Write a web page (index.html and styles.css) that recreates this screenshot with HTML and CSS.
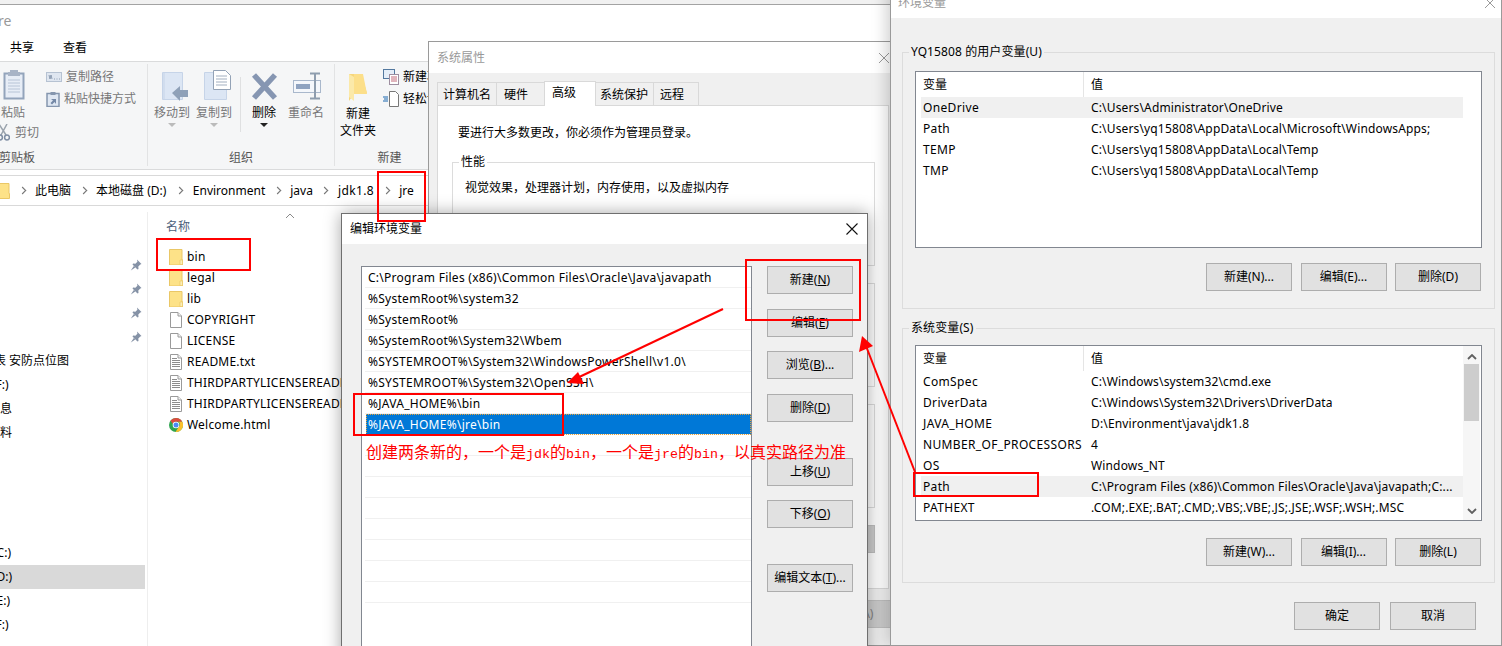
FILE: index.html
```html
<!DOCTYPE html>
<html lang="zh">
<head>
<meta charset="utf-8">
<title>环境变量</title>
<link rel="stylesheet" href="styles.css">
</head>
<body>
<svg class="defs" width="0" height="0" aria-hidden="true">
  <symbol id="folder" viewBox="0 0 14 16">
    <path d="M.5.5h12.5v10.500h1v5h-13.500z" fill="#fde288" stroke="#eac766"/>
    <path d="M11 11h2.500v4.500h-2.500z" fill="#fbeeb8" stroke="#eac766" stroke-width=".7"/>
  </symbol>
  <symbol id="doc" viewBox="0 0 14 16">
    <path d="M1.500.500h7.500l3.500 3.500v11.500h-11z" fill="#fff" stroke="#9a9a9a"/>
    <path d="M9 .5v3.500h3.500" fill="#f2f2f2" stroke="#9a9a9a"/>
  </symbol>
  <symbol id="txt" viewBox="0 0 14 16">
    <path d="M1.500.500h7.500l3.500 3.500v11.500h-11z" fill="#fff" stroke="#9a9a9a"/>
    <path d="M9 .5v3.500h3.500" fill="#f2f2f2" stroke="#9a9a9a"/>
    <path d="M3 4.500h5M3 6.500h8M3 8.500h8M3 10.500h8M3 12.500h8" stroke="#8c8c8c" fill="none"/>
  </symbol>
  <symbol id="pin" viewBox="0 0 12 12">
    <path d="M7 .5l4.500 4.500-1.200.6-2 2 .2 2.300-1 .6-5-5 .6-1 2.300.2 2-2zM3.800 7l-3 4.500 4.500-3z" fill="#8592a6"/>
  </symbol>
</svg>

<section class="win explorer">
  <div class="ex-title">re</div>
  <div class="ex-tabs"><span>共享</span><span>查看</span></div>
  <div class="ribbon">
    <div class="rgroup rg-clip">
      <div class="rbody">
        <div class="clip-col">
          <svg class="ic-paste" width="22" height="31" viewBox="0 0 22 31"><path d="M1.500 4.500h19v25h-19z" fill="#e7edf6" stroke="#93a4bb" stroke-width="2"/><path d="M7 3h8V1H7zM5 3h12v4H5z" fill="#a8b4c6"/><path d="M5 11h12M5 14h12M5 17h12M5 20h12M5 23h12" stroke="#b7c4d6"/></svg>
          <span class="lbl paste-lbl dim">粘贴</span>
          <span class="cut-row"><svg width="13" height="17" viewBox="0 0 13 17"><path d="M10 0L4 11M2 0l7 11" stroke="#9aa3ad" stroke-width="1.500" fill="none"/><circle cx="3" cy="13.500" r="2.400" fill="none" stroke="#7f8ea3" stroke-width="1.500"/><circle cx="10" cy="13.500" r="2.400" fill="none" stroke="#7f8ea3" stroke-width="1.500"/></svg><span class="lbl dim cut-lbl">剪切</span></span>
        </div>
        <div class="clip-list">
          <span class="clip-item first"><svg width="16" height="10" viewBox="0 0 16 10"><rect x=".5" y=".5" width="15" height="9" fill="#dfe6f0" stroke="#b6c2d2"/><path d="M3 3l1 4 1-4 1 4M8 7h1M10.500 7h1M13 7h1" stroke="#7a8ba3" fill="none" stroke-width=".8"/></svg><span class="lbl dim">复制路径</span></span>
          <span class="clip-item"><svg width="14" height="16" viewBox="0 0 14 16"><path d="M1 2.500h12v13h-12z" fill="#dfe7f2" stroke="#8596ae" stroke-width="1.500"/><path d="M4.500 1h5v3h-5z" fill="#8596ae"/><path d="M5 8h5v5l-1.500-2-2.500 2.500-1.500-1.500 2.500-2.500z" fill="#7488a6"/></svg><span class="lbl dim">粘贴快捷方式</span></span>
        </div>
      </div>
      <div class="rlabel clip-label">剪贴板</div>
    </div>
    <div class="rgroup rg-org">
      <div class="rbody org-body">
        <div class="bigitem">
          <svg width="36" height="39" viewBox="0 0 36 39"><path d="M8.500 5.500h20v27h-20z" fill="#dce6f4" stroke="#c6d4e8"/><path d="M10 5.500v27" stroke="#c6d4e8"/><path d="M18 26l8-7v4h8v7h-8v4z" fill="#8fa1b8"/></svg>
          <span class="lbl grey">移动到</span><i class="tri pale"></i>
        </div>
        <div class="bigitem">
          <svg width="36" height="39" viewBox="0 0 36 39"><path d="M8.500 5.500h22v27h-22z" fill="#dce6f4" stroke="#c6d4e8"/><path d="M17.500 3.500h12l5 5v14h-17z" fill="#fff" stroke="#93a2b6"/><path d="M20 9h11M20 12h11M20 15h11M20 18h11" stroke="#a2afc0"/></svg>
          <span class="lbl grey">复制到</span><i class="tri pale"></i>
        </div>
        <div class="vsep"></div>
        <div class="bigitem">
          <svg width="36" height="39" viewBox="0 0 36 39"><path d="M8 8l21 23M29 8L8 31" stroke="#8696b2" stroke-width="5.500" fill="none"/></svg>
          <span class="lbl">删除</span><i class="tri dark"></i>
        </div>
        <div class="bigitem">
          <svg width="36" height="39" viewBox="0 0 36 39"><rect x="5.500" y="13.500" width="27" height="12" fill="#f4f7fb" stroke="#a9b8cc"/><rect x="8" y="17" width="14" height="5" fill="#8fa3c0"/><path d="M22 6.500h10M27 6.500v25M22 31.500h10" stroke="#8e9dae" stroke-width="2" fill="none"/></svg>
          <span class="lbl grey">重命名</span>
        </div>
      </div>
      <div class="rlabel">组织</div>
    </div>
    <div class="rgroup rg-new">
      <div class="rbody new-body">
        <div class="bigitem">
          <svg width="36" height="39" viewBox="0 0 36 39"><path d="M9 7h14v6l4 13-13 1-5 7z" fill="#f6d67c"/><path d="M9 7l5 3v24l-5-4z" fill="#fbe9a9"/><path d="M23 7h-9v20h13z" fill="#fcdf8a"/></svg>
          <span class="lbl two">新建<br>文件夹</span>
        </div>
        <div class="new-list">
          <span class="clip-item first"><svg width="16" height="16" viewBox="0 0 16 16"><rect x=".5" y=".5" width="11" height="9" fill="#e5eef8" stroke="#53789f"/><rect x="6.500" y="5.500" width="9" height="10" fill="#fff" stroke="#9e8ea0"/><path d="M8 8h6M8 10h6M8 12h6" stroke="#c26b7a"/></svg><span class="lbl">新建项目</span></span>
          <span class="clip-item"><svg width="16" height="16" viewBox="0 0 16 16"><path d="M6.500.5h6l3 3v12h-9z" fill="#fff" stroke="#777"/><path d="M0 6h5M1 8h4M0 10h5" stroke="#1a66b0" stroke-width="1.200"/></svg><span class="lbl">轻松访问</span></span>
        </div>
      </div>
      <div class="rlabel">新建</div>
    </div>
  </div>
  <div class="addr">
    <svg class="addr-folder" width="10" height="16" viewBox="0 0 10 16"><path d="M-3 .5h12v10h.5v5h-12.500z" fill="#fde288" stroke="#eac766"/></svg>
    <i class="chev"></i><span>此电脑</span>
    <i class="chev"></i><span class="wide-a">本地磁盘 (D:)</span>
    <i class="chev"></i><span>Environment</span>
    <i class="chev"></i><span>java</span>
    <i class="chev"></i><span class="wide">jdk1.8</span>
    <i class="chev"></i><span>jre</span>
  </div>
  <div class="ex-main">
    <nav class="navpane">
      <div class="nrow"><svg class="pin" width="12" height="12"><use href="#pin"/></svg></div>
      <div class="nrow"><svg class="pin" width="12" height="12"><use href="#pin"/></svg></div>
      <div class="nrow"><svg class="pin" width="12" height="12"><use href="#pin"/></svg></div>
      <div class="nrow"><svg class="pin" width="12" height="12"><use href="#pin"/></svg></div>
      <div class="nrow"><span class="nt s6">表 安防点位图</span></div>
      <div class="nrow"><span class="nt s5">(F:)</span></div>
      <div class="nrow"><span class="nt s12">信息</span></div>
      <div class="nrow"><span class="nt s12">资料</span></div>
      <div class="nrow"></div><div class="nrow"></div><div class="nrow"></div><div class="nrow"></div>
      <div class="nrow"><span class="nt s4">(C:)</span></div>
      <div class="nrow on"><span class="nt s4">(D:)</span></div>
      <div class="nrow"><span class="nt s4">(E:)</span></div>
      <div class="nrow"><span class="nt s5">(F:)</span></div>
    </nav>
    <div class="files">
      <div class="fhead"><span>名称</span><svg class="sortcaret" width="10" height="6" viewBox="0 0 10 6"><path d="M1 5l4-4 4 4" fill="none" stroke="#8a8a8a"/></svg></div>
      <div class="frow"><svg width="14" height="16"><use href="#folder"/></svg><span>bin</span></div>
      <div class="frow"><svg width="14" height="16"><use href="#folder"/></svg><span>legal</span></div>
      <div class="frow"><svg width="14" height="16"><use href="#folder"/></svg><span>lib</span></div>
      <div class="frow"><svg width="14" height="16"><use href="#doc"/></svg><span>COPYRIGHT</span></div>
      <div class="frow"><svg width="14" height="16"><use href="#doc"/></svg><span>LICENSE</span></div>
      <div class="frow"><svg width="14" height="16"><use href="#txt"/></svg><span>README.txt</span></div>
      <div class="frow"><svg width="14" height="16"><use href="#txt"/></svg><span>THIRDPARTYLICENSEREADME.txt</span></div>
      <div class="frow"><svg width="14" height="16"><use href="#txt"/></svg><span>THIRDPARTYLICENSEREADME-JAVAFX.txt</span></div>
      <div class="frow"><svg width="14" height="16" viewBox="0 0 14 14"><circle cx="7" cy="7" r="7" fill="#2ea44f"/><path d="M7 0a7 7 0 0 1 6.200 3.700H7A3.300 3.300 0 0 0 3.900 6L1.400 2.800A7 7 0 0 1 7 0z" fill="#dd4b3e"/><path d="M13.200 3.700A7 7 0 0 1 6.500 14l3.200-5A3.300 3.300 0 0 0 9.500 3.700z" fill="#fbc02d"/><circle cx="7" cy="7" r="3.300" fill="#fff"/><circle cx="7" cy="7" r="2.500" fill="#4a8af4"/></svg><span>Welcome.html</span></div>
    </div>
  </div>
</section>

<section class="win sysprops">
  <header class="sys-title"><span>系统属性</span><svg width="10" height="10" viewBox="0 0 10 10"><path d="M0 0l10 10M10 0L0 10" stroke="#999"/></svg></header>
  <div class="sys-body">
    <div class="tabs">
      <span class="tab t1">计算机名</span><span class="tab t2">硬件</span><span class="tab t3 on">高级</span><span class="tab t4">系统保护</span><span class="tab t5">远程</span>
    </div>
    <div class="tabpanel">
      <p class="sys-note">要进行大多数更改，你必须作为管理员登录。</p>
      <div class="sbox perf"><span class="sbox-legend">性能</span><p>视觉效果，处理器计划，内存使用，以及虚拟内存</p></div>
      <div class="sbox prof"></div>
      <div class="sbox boot"></div>
      <div class="sys-envrow"><span class="btn envbtn dis">环境变量(N)...</span></div>
    </div>
    <div class="sys-foot"><span class="btn applybtn dis">应用(A)</span></div>
  </div>
</section>

<section class="win envdlg">
  <header class="env-title"><span>环境变量</span><svg width="10" height="10" viewBox="0 0 10 10"><path d="M0 0l10 10M10 0L0 10" stroke="#999"/></svg></header>
  <div class="env-body">
    <fieldset class="grp grp-user">
      <legend>YQ15808 的用户变量(U)</legend>
      <div class="lv lv-user">
        <div class="lv-main">
          <div class="lv-head"><span>变量</span><span>值</span></div>
          <div class="lv-row sel"><span>OneDrive</span><span>C:\Users\Administrator\OneDrive</span></div>
          <div class="lv-row"><span>Path</span><span>C:\Users\yq15808\AppData\Local\Microsoft\WindowsApps;</span></div>
          <div class="lv-row"><span>TEMP</span><span>C:\Users\yq15808\AppData\Local\Temp</span></div>
          <div class="lv-row"><span>TMP</span><span>C:\Users\yq15808\AppData\Local\Temp</span></div>
        </div>
      </div>
      <div class="btnrow"><span class="btn">新建(N)...</span><span class="btn">编辑(E)...</span><span class="btn">删除(D)</span></div>
    </fieldset>
    <fieldset class="grp grp-sys">
      <legend>系统变量(S)</legend>
      <div class="lv lv-sys">
        <div class="lv-main">
          <div class="lv-head"><span>变量</span><span>值</span></div>
          <div class="lv-row"><span>ComSpec</span><span>C:\Windows\system32\cmd.exe</span></div>
          <div class="lv-row"><span>DriverData</span><span>C:\Windows\System32\Drivers\DriverData</span></div>
          <div class="lv-row"><span>JAVA_HOME</span><span>D:\Environment\java\jdk1.8</span></div>
          <div class="lv-row"><span>NUMBER_OF_PROCESSORS</span><span>4</span></div>
          <div class="lv-row"><span>OS</span><span>Windows_NT</span></div>
          <div class="lv-row sel"><span>Path</span><span>C:\Program Files (x86)\Common Files\Oracle\Java\javapath;C:...</span></div>
          <div class="lv-row"><span>PATHEXT</span><span>.COM;.EXE;.BAT;.CMD;.VBS;.VBE;.JS;.JSE;.WSF;.WSH;.MSC</span></div>
        </div>
        <div class="sbar">
          <svg width="10" height="6" viewBox="0 0 10 6"><path d="M1 5l4-4 4 4" fill="none" stroke="#606060" stroke-width="1.800"/></svg>
          <div class="sthumb"></div>
          <svg class="sdown" width="10" height="6" viewBox="0 0 10 6"><path d="M1 1l4 4 4-4" fill="none" stroke="#606060" stroke-width="1.800"/></svg>
        </div>
      </div>
      <div class="btnrow"><span class="btn">新建(W)...</span><span class="btn">编辑(I)...</span><span class="btn">删除(L)</span></div>
    </fieldset>
    <div class="env-foot"><span class="btn">确定</span><span class="btn">取消</span></div>
  </div>
</section>

<section class="win editdlg">
  <header class="edit-title"><span>编辑环境变量</span><svg width="12" height="12" viewBox="0 0 12 12"><path d="M.5.500l11 11M11.500.500l-11 11" stroke="#111" stroke-width="1.100"/></svg></header>
  <div class="edit-body">
    <div class="pathlist">
      <div class="pl-row">C:\Program Files (x86)\Common Files\Oracle\Java\javapath</div>
      <div class="pl-row">%SystemRoot%\system32</div>
      <div class="pl-row">%SystemRoot%</div>
      <div class="pl-row">%SystemRoot%\System32\Wbem</div>
      <div class="pl-row">%SYSTEMROOT%\System32\WindowsPowerShell\v1.0\</div>
      <div class="pl-row">%SYSTEMROOT%\System32\OpenSSH\</div>
      <div class="pl-row">%JAVA_HOME%\bin</div>
      <div class="pl-row sel">%JAVA_HOME%\jre\bin</div>
      <div class="pl-row"></div><div class="pl-row"></div><div class="pl-row"></div><div class="pl-row"></div>
      <div class="pl-row"></div><div class="pl-row"></div><div class="pl-row"></div><div class="pl-row"></div>
    </div>
    <div class="edit-btns">
      <span class="btn">新建(<u>N</u>)</span>
      <span class="btn">编辑(<u>E</u>)</span>
      <span class="btn">浏览(<u>B</u>)...</span>
      <span class="btn">删除(<u>D</u>)</span>
      <span class="btn push">上移(<u>U</u>)</span>
      <span class="btn">下移(<u>O</u>)</span>
      <span class="btn push2">编辑文本(<u>T</u>)...</span>
    </div>
  </div>
</section>

<div class="mark m-jre"></div>
<div class="mark m-bin"></div>
<div class="mark m-new"></div>
<div class="mark m-java"></div>
<div class="mark m-path"></div>
<svg class="arrows" width="1502" height="646" viewBox="0 0 1502 646">
  <path d="M723 309L575 379" stroke="#f00" stroke-width="2" fill="none"/>
  <path d="M567 383l11-11 6 12z" fill="#f00"/>
  <path d="M915 472L866 346" stroke="#f00" stroke-width="2" fill="none"/>
  <path d="M862 336l-3 16 14-6z" fill="#f00"/>
</svg>
<div class="note">创建两条新的，一个是<span class="lat">jdk</span>的<span class="lat">bin</span>，一个是<span class="lat">jre</span>的<span class="lat">bin</span>，以真实路径为准</div>
</body>
</html>
```
FILE: styles.css
```css
* { box-sizing: border-box; }
html, body { margin: 0; height: 100%; }
body {
  position: relative;
  width: 1502px;
  height: 646px;
  overflow: hidden;
  background: #f1f1f1;
  color: #000;
  font: 12px/16px "Noto Sans", "Noto Sans CJK SC", sans-serif;
}
.defs { position: absolute; }
.win { position: absolute; display: flex; flex-direction: column; overflow: hidden; background: #fff; }

/* explorer window */
.explorer { left: 0; top: 4px; width: 900px; height: 642px; border-top: 1px solid #a3a3a3; }
.ex-title { height: 29px; padding-top: 8px; margin-left: -2px; color: #999; font-size: 14px; }
.ex-tabs { height: 27px; display: flex; gap: 29px; padding: 6px 0 0 10px; }
.ribbon { height: 109px; flex: none; display: flex; padding-top: 2px; background: #f5f6f7; border-top: 1px solid #dadbdc; border-bottom: 1px solid #dadbdc; }
.rgroup { display: flex; flex-direction: column; height: 102px; border-right: 1px solid #e2e3e4; flex: none; }
.rbody { flex: 1; display: flex; min-height: 0; }
.rlabel { height: 18px; line-height: 20px; text-align: center; color: #555; }
.rg-clip { width: 148px; }
.clip-label { text-align: left; margin-left: -1px; }
.rg-org { width: 187px; }
.rg-new { width: 110px; }
.lbl { white-space: nowrap; display: block; }
.dim, .grey { color: #777; }
.clip-col { width: 46px; flex: none; padding-top: 5px; display: flex; flex-direction: column; }
.ic-paste { margin-left: 3px; flex: none; }
.paste-lbl { margin: 5px 0 0 1px; }
.cut-row { display: flex; align-items: center; gap: 5px; margin: 3px 0 0 -3px; }
.clip-list { display: flex; flex-direction: column; padding-top: 5px; gap: 6px; }
.clip-item { display: flex; align-items: center; gap: 4px; height: 16px; }
.org-body { padding-left: 6px; gap: 6px; }
.bigitem { width: 36px; flex: none; display: flex; flex-direction: column; align-items: center; padding-top: 3px; }
.bigitem .lbl { margin-top: -1px; }
.bigitem .lbl.two { text-align: center; line-height: 17px; }
.tri { display: block; width: 0; height: 0; margin-top: 2px; border: 4px solid transparent; border-bottom: 0; }
.tri.pale { border-top-color: #bbb; }
.tri.dark { border-top-color: #222; }
.vsep { width: 1px; height: 55px; margin: 13px -1px 0 2px; background: #dfe0e1; }
.new-body { padding-left: 5px; }
.new-list { display: flex; flex-direction: column; gap: 6px; padding: 5px 0 0 7px; }

.addr { height: 31px; flex: none; display: flex; align-items: center; gap: 10.5px; margin-top: 5px; background: #fff; border-top: 1px solid #d9d9d9; border-bottom: 1px solid #d9d9d9; white-space: nowrap; }
.addr-folder { flex: none; }
.addr .wide { letter-spacing: .4px; }
.addr .wide-a { margin-right: 1.500px; }
.chev { width: 5px; height: 5px; flex: none; margin-left: -1px; border-top: 1px solid #777; border-right: 1px solid #777; transform: rotate(45deg) scale(1.1); }
.ex-main { flex: 1; display: flex; padding-top: 6px; min-height: 0; }
.navpane { width: 148px; flex: none; padding-top: 41px; border-right: 1px solid #eee; overflow: hidden; }
.nrow { height: 24px; width: 145px; display: flex; align-items: center; white-space: nowrap; }
.nrow.on { background: #d9d9d9; }
.pin { margin-left: 130px; }
.s4 { margin-left: -7px; }
.s5 { margin-left: -8px; }
.s6 { margin-left: -6px; }
.s12 { margin-left: -12px; }
.files { flex: 1; padding-left: 21px; position: relative; min-width: 0; }
.fhead { height: 34px; color: #4c607a; margin-left: -3px; padding-top: 7px; }
.sortcaret { position: absolute; left: 137px; top: 1px; }
.frow { height: 21px; display: flex; align-items: center; gap: 4px; white-space: nowrap; letter-spacing: .2px; }
.frow svg { flex: none; }

/* system properties */
.sysprops { left: 428px; top: 41px; width: 470px; height: 605px; border: 1px solid #9a9a9a; background: #f0f0f0; }
.sys-title { height: 31px; flex: none; background: #fff; color: #999; display: flex; justify-content: space-between; align-items: center; padding: 0 8px; }
.sys-body { flex: 1; display: flex; flex-direction: column; padding: 0 8px; }
.tabs { display: flex; height: 32px; padding: 9px 0 0 1px; align-items: flex-end; }
.tab { height: 23px; padding-top: 4px; background: #f0f0f0; border: 1px solid #d9d9d9; border-bottom: 0; margin-left: -1px; }
.t1 { width: 60px; padding-left: 5px; }
.t2 { width: 49px; padding-left: 7px; }
.t3 { width: 52px; padding-left: 7px; }
.t4 { width: 59px; padding-left: 4px; }
.t5 { width: 46px; padding-left: 6px; }
.tab.on { height: 25px; background: #fff; position: relative; top: 1px; padding-top: 3px; }
.tabpanel { height: 484px; flex: none; background: #fff; border: 1px solid #d9d9d9; padding: 0 13px 0 14px; }
.sys-note { margin: 19px 0 21px 6px; }
.sbox { position: relative; border: 1px solid #dcdcdc; }
.perf { height: 104px; padding: 17px 0 0 12px; }
.perf p { margin: 0; }
.sbox-legend { position: absolute; left: 6px; top: -9px; padding: 0 2px; background: #fff; }
.prof, .boot { height: 104px; margin-top: 17px; }
.sys-envrow { display: flex; justify-content: flex-end; margin-top: 17px; }
.sys-foot { display: flex; justify-content: flex-end; padding-top: 11px; margin-right: -8px; }
.btn { display: flex; align-items: center; justify-content: center; flex: none; width: 86px; height: 28px; background: #e1e1e1; border: 1px solid #adadad; white-space: nowrap; }
.btn.envbtn { width: 100px; justify-content: flex-start; padding-left: 4px; }
.btn.dis { background: #ccc; border-color: #bfbfbf; color: #838383; }

/* environment variables */
.envdlg { left: 890px; top: -13px; width: 612px; height: 659px; background: #f0f0f0; border: 1px solid #9a9a9a; border-top: 0; box-shadow: -4px 0 14px rgba(0,0,0,.18); }
.env-title { height: 31px; flex: none; background: #fff; display: flex; justify-content: space-between; align-items: center; padding: 0 6px 0 7px; color: #999; }
.env-body { flex: 1; padding: 0 6px 0 11px; display: flex; flex-direction: column; }
.grp { margin: 0; padding: 0 12px; border: 1px solid #dcdcdc; min-width: 0; }
.grp legend { padding: 0 2px; margin-left: -6px; line-height: 16px; height: 16px; letter-spacing: .1px; }
.grp-user { margin-top: 26px; height: 265px; }
.grp-sys { margin-top: 11px; height: 263px; }
.lv { display: flex; background: #fff; border: 1px solid #828790; overflow: hidden; }
.lv-user { height: 177px; margin-top: 11px; }
.lv-sys { height: 176px; margin-top: 9px; }
.lv-main { width: 547px; flex: none; padding-left: 5px; }
.lv-head, .lv-row { display: grid; grid-template-columns: 168px 1fr; padding-left: 2px; white-space: nowrap; }
.lv-head { height: 25px; align-items: center; position: relative; }
.lv-head::after { content: ""; position: absolute; left: 162px; top: 0; bottom: 0; width: 1px; background: #e5e5e5; }
.lv-row { height: 21px; align-items: center; letter-spacing: .15px; }
.lv-row span:first-child { letter-spacing: .35px; }
.lv-row.sel { background: #f0f0f0; }
.sbar { width: 17px; flex: none; display: flex; flex-direction: column; align-items: center; background: #f6f6f6; padding-top: 8px; }
.sthumb { width: 15px; height: 57px; margin-top: 4px; background: #cdcdcd; }
.sdown { margin-top: auto; margin-bottom: 6px; }
.btnrow { display: flex; justify-content: flex-end; gap: 8.500px; margin: 15px 1px 0 0; }
.grp-sys .btnrow { margin-top: 17px; }
.env-foot { display: flex; justify-content: flex-end; gap: 10px; margin: 19px 19px 0 0; }

/* edit dialog */
.editdlg { left: 341px; top: 213px; width: 527px; height: 460px; background: #f0f0f0; border: 1px solid #6f6f6f; box-shadow: 0 0 16px rgba(0,0,0,.35); }
.edit-title { height: 30px; flex: none; background: #fff; display: flex; justify-content: space-between; align-items: center; padding: 0 9px 0 8px; }
.edit-body { display: flex; gap: 15px; padding: 22px 0 0 19px; }
.pathlist { width: 391px; height: 420px; flex: none; padding-left: 3px; background: #fff; border: 1px solid #828790; letter-spacing: .27px; }
.pl-row { height: 21px; padding-left: 3px; border-bottom: 1px solid #f0f0f0; line-height: 22px; white-space: nowrap; }
.pl-row.sel { margin-left: 1px; padding-left: 2px; background: #0078d7; color: #fff; outline: 1px dotted #e8a33a; outline-offset: -1px; }
.edit-btns { display: flex; flex-direction: column; gap: 14.5px; }
.push, .push2 { margin-top: 21.5px; }

/* annotations */
.mark { position: absolute; border: 2px solid #f00; }
.m-jre { left: 377px; top: 171px; width: 49px; height: 51px; }
.m-bin { left: 156px; top: 238px; width: 95px; height: 33px; }
.m-new { left: 745px; top: 259px; width: 116px; height: 62px; }
.m-java { left: 353px; top: 393px; width: 211px; height: 43px; }
.m-path { left: 913px; top: 472px; width: 126px; height: 25px; }
.arrows { position: absolute; left: 0; top: 0; pointer-events: none; }
.note { position: absolute; left: 366px; top: 441px; height: 20px; color: #f00; font: 16px/20px "Noto Sans CJK SC", sans-serif; white-space: nowrap; }
.lat { font: 13.330px/20px "Liberation Mono", monospace; }
```
